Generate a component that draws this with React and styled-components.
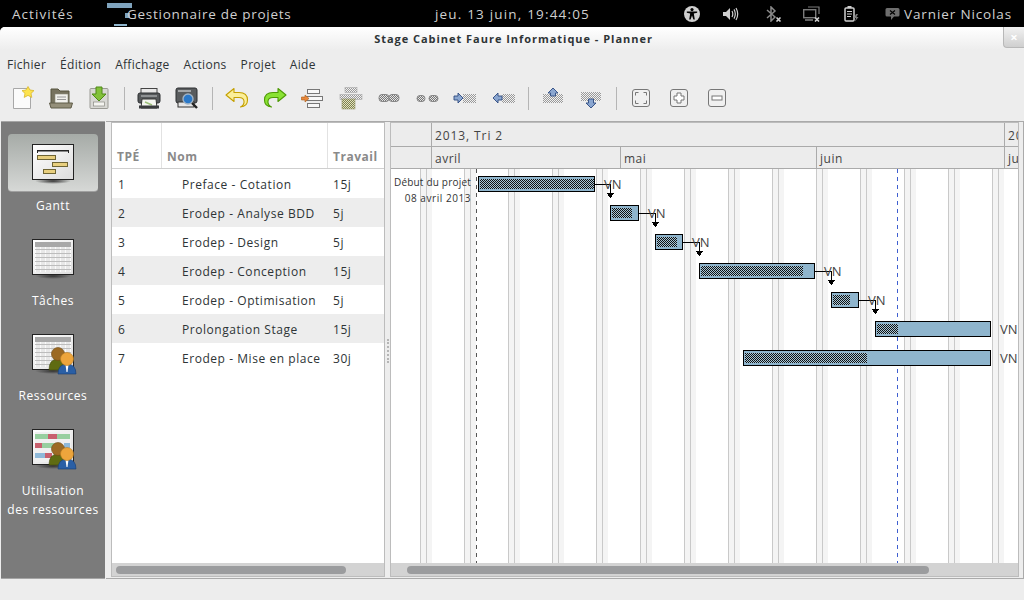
import React from 'react';
import styled, { createGlobalStyle } from 'styled-components';

const Global = createGlobalStyle`
	html, body {
		margin: 0;
		padding: 0;
		background: #000;
	}
	* {
		box-sizing: border-box;
	}
`;

const Page = styled.div`
	width: 1024px;
	height: 600px;
	overflow: hidden;
	display: flex;
	flex-direction: column;
	font-family: 'Open Sans', 'DejaVu Sans', sans-serif;
	color: #2e3436;
`;

const TopBar = styled.header`
	height: 27px;
	background: #000;
	color: #cfcfcf;
	display: flex;
	align-items: center;
	font-size: 13.5px;
	position: relative;
`;

const Activities = styled.span`
	margin-left: 12px;
	width: 94px;
	letter-spacing: 1.05px;
`;

const AppName = styled.span`
	margin-left: -5px;
	letter-spacing: 0.73px;
`;

const Clock = styled.span`
	position: absolute;
	left: 435px;
	letter-spacing: 1.18px;
`;

const Tray = styled.div`
	margin-left: auto;
	display: flex;
	align-items: center;
	padding-right: 12px;
`;

const User = styled.span`
	letter-spacing: 0.87px;
`;

const Window = styled.div`
	flex: 1;
	background: #ededed;
	border-radius: 5px 5px 0 0;
	display: flex;
	flex-direction: column;
	position: relative;
`;

const TitleBar = styled.div`
	height: 23px;
	background: linear-gradient(#fff, #ededed);
	border-radius: 5px 5px 0 0;
	display: flex;
	align-items: center;
	justify-content: center;
	font-size: 11px;
	font-weight: 700;
	letter-spacing: 0.97px;
	padding-left: 3px;
`;

const CloseButton = styled.div`
	position: absolute;
	top: 0;
	right: 0;
	width: 21px;
	height: 21px;
	background: linear-gradient(#f2f2f2, #cfcfcf);
	border: 1px solid #b8b8b8;
	border-width: 0 0 1px 1px;
	border-radius: 0 0 0 4px;
	color: #fff;
	font-size: 13px;
	font-weight: 700;
	display: grid;
	place-items: center;
`;

const MenuBar = styled.nav`
	height: 29px;
	display: flex;
	align-items: center;
	gap: 14px;
	padding-left: 7px;
	font-size: 12px;
	letter-spacing: 0.3px;
`;

const Toolbar = styled.div`
	height: 38px;
	display: flex;
	align-items: center;
	padding-left: 4px;
`;

const ToolButton = styled.div`
	width: 38px;
	height: 38px;
	display: grid;
	place-items: center;
`;

const ToolSeparator = styled.div`
	width: 12px;
	height: 23px;
	position: relative;
	display: flex;
	justify-content: center;

	&::before {
		content: '';
		width: 1px;
		background: #b5b5b5;
	}
`;

const Main = styled.main`
	margin-top: 4px;
	height: 458px;
	display: flex;
	padding-left: 1px;
`;

const Sidebar = styled.aside`
	width: 104px;
	background: #7b7b7b;
	border: 1px solid #a5a5a5;
	border-width: 1px 0 1px 0;
	padding-top: 12px;
	display: flex;
	flex-direction: column;
	align-items: center;
`;

const SideItem = styled.div`
	width: 90px;
	height: 95px;
	display: flex;
	flex-direction: column;
	align-items: center;
	color: #fff;
	font-size: 12px;
	letter-spacing: 0.55px;
	text-align: center;
	line-height: 19px;
	white-space: nowrap;
`;

const SideIcon = styled.div`
	width: 90px;
	height: 58px;
	flex: none;
	display: grid;
	place-items: center;
	border-radius: 4px;
	margin-bottom: 4px;
	background: ${(p) => (p.$active ? 'linear-gradient(#a6aba7, #d6d8d6)' : 'transparent')};
	border-bottom: 1px solid ${(p) => (p.$active ? '#a0a0a0' : 'transparent')};
`;

const Content = styled.div`
	flex: 1;
	margin-left: 1px;
	border: 1px solid #aaa;
	border-left: 0;
	padding: 0 4px 1px 5px;
	display: flex;
	background: #ededed;
`;

const Panel = styled.section`
	background: #fff;
	border: 1px solid #bcbcbc;
	display: flex;
	flex-direction: column;
	width: ${(p) => p.$width}px;
	flex: none;
`;

const Grip = styled.div`
	width: 5px;
	flex: none;
	display: flex;
	align-items: center;
	justify-content: center;
	padding-top: 2px;

	&::before {
		content: '';
		height: 24px;
		border-left: 2px dotted #b5b5b5;
	}
`;

const TableHead = styled.div`
	height: 46px;
	flex: none;
	display: grid;
	grid-template-columns: 50px 166px 1fr;
	border-bottom: 1px solid #cfcfcf;
`;

const HeadCell = styled.div`
	display: flex;
	align-items: flex-end;
	padding: 0 0 3px 5px;
	font-size: 12px;
	font-weight: 700;
	color: #8a8a8a;
	letter-spacing: 0.5px;
	border-right: ${(p) => (p.$last ? '0' : '1px solid #e2e2e2')};
`;

const Row = styled.div`
	height: 29px;
	flex: none;
	display: grid;
	grid-template-columns: 50px 166px 1fr;
	align-items: center;
	font-size: 12px;
	letter-spacing: 0.55px;
	background: ${(p) => (p.$even ? '#ededed' : '#fff')};
	padding-top: 2px;
`;

const Cell = styled.div`
	padding-left: ${(p) => p.$pad}px;
	white-space: nowrap;
`;

const Spacer = styled.div`
	flex: 1;
	min-height: 0;
	overflow: hidden;
`;

const ScrollTrack = styled.div`
	height: 13px;
	flex: none;
	background: #d3d3d3;
	display: flex;
	align-items: center;
	padding-left: ${(p) => p.$left}px;
`;

const ScrollThumb = styled.div`
	width: ${(p) => p.$width}px;
	height: 8px;
	border-radius: 4px;
	background: #9b9c9e;
`;

const TimeRow = styled.div`
	display: flex;
	height: ${(p) => p.$height}px;
	flex: none;
	background: #ececec;
	border-bottom: 1px solid #aaa;
	overflow: hidden;
	font-size: 12px;
	letter-spacing: ${(p) => p.$spacing}px;
	color: #444;
`;

const TimeCell = styled.div`
	width: ${(p) => p.$width}px;
	flex: none;
	border-right: 1px solid #aaa;
	padding: 1px 0 0 3px;
	display: flex;
	align-items: center;
	white-space: nowrap;
`;

const ChartBody = styled.div`
	flex: 1;
	min-height: 0;
	overflow: hidden;

	svg {
		display: block;
		font-family: 'Open Sans', 'DejaVu Sans', sans-serif;
	}
`;

const tasks = [
	['1', 'Preface - Cotation', '15j'],
	['2', 'Erodep - Analyse BDD', '5j'],
	['3', 'Erodep - Design', '5j'],
	['4', 'Erodep - Conception', '15j'],
	['5', 'Erodep - Optimisation', '5j'],
	['6', 'Prolongation Stage', '15j'],
	['7', 'Erodep - Mise en place', '30j'],
];

// x, width, y, hatched width, next task x (for the link)
const bars = [
	{ x: 478, w: 117, y: 176, done: 114, next: 610 },
	{ x: 610, w: 29, y: 205, done: 20, next: 655 },
	{ x: 655, w: 28, y: 234, done: 20, next: 699 },
	{ x: 699, w: 116, y: 263, done: 102, next: 831 },
	{ x: 831, w: 28, y: 292, done: 17, next: 875 },
	{ x: 875, w: 116, y: 321, done: 21 },
	{ x: 743, w: 248, y: 350, done: 122 },
];

const weekends = [420, 464, 508, 552, 596, 640, 684, 728, 772, 816, 860, 904, 948, 992];

function Chart() {
	return (
		<svg width='627' height='394' viewBox='391 169 627 394' shapeRendering='crispEdges'>
			<defs>
				<pattern id='hatch' width='2' height='2' patternUnits='userSpaceOnUse'>
					<rect width='2' height='2' fill='#a6c6d8' />
					<rect width='1' height='1' fill='#111' />
					<rect x='1' y='1' width='1' height='1' fill='#111' />
				</pattern>
			</defs>
			{weekends.map((x) => (
				<g key={x}>
					<rect x={x} y='169' width='12' height='394' fill='#f4f4f4' />
					<rect x={x} y='169' width='1' height='394' fill='#c9c9c9' />
					<rect x={x + 6} y='169' width='1' height='394' fill='#c9c9c9' />
				</g>
			))}
			<line x1='476.5' y1='169' x2='476.5' y2='563' stroke='#555' strokeDasharray='4 4' />
			<line x1='897.5' y1='169' x2='897.5' y2='563' stroke='#3f5fd0' strokeDasharray='4 4' />
			<text x='471' y='186' textAnchor='end' fontSize='10' letterSpacing='0.2' fill='#333'>Début du projet</text>
			<text x='471' y='202' textAnchor='end' fontSize='10' letterSpacing='0.55' fill='#333'>08 avril 2013</text>
			{bars.map((b) => (
				<g key={b.y}>
					{b.next && (
						<g>
							<rect x={b.x + b.w} y={b.y + 8} width={b.next - b.x - b.w + 1} height='1' fill='#000' />
							<rect x={b.next} y={b.y + 8} width='1' height='14' fill='#000' />
							<polygon points={`${b.next - 3},${b.y + 17} ${b.next + 4},${b.y + 17} ${b.next + 1},${b.y + 22} ${b.next},${b.y + 22}`} fill='#000' />
						</g>
					)}
					<rect x={b.x + 0.5} y={b.y + 0.5} width={b.w - 1} height='15' fill='#8fb5cd' stroke='#000' />
					<rect x={b.x + 2} y={b.y + 3} width={b.done} height='10' fill='url(#hatch)' />
					<text x={b.x + b.w + 9} y={b.y + 13} fontSize='13' fill='#444'>VN</text>
				</g>
			))}
		</svg>
	);
}

function ActivityIcon() {
	return (
		<svg width='26' height='27' viewBox='0 0 26 27' style={{ flex: 'none' }}>
			<rect x='1' y='3' width='25' height='5' fill='#7fa3bd' />
			<rect x='19' y='13' width='5' height='5' fill='#7fa3bd' />
			<rect x='8' y='24' width='13' height='2' fill='#8fb5cd' />
		</svg>
	);
}

function Accessibility() {
	return (
		<svg width='16' height='16' viewBox='0 0 16 16'>
			<circle cx='8' cy='8' r='8' fill='#cfcfcf' />
			<circle cx='8' cy='3.6' r='1.6' fill='#000' />
			<path d='M2.8 5.6 L13.2 5.6 L13.2 6.8 L9.8 7.6 L10.8 13.4 L9.4 13.4 L8 9.6 L6.6 13.4 L5.2 13.4 L6.2 7.6 L2.8 6.8 Z' fill='#000' />
		</svg>
	);
}

function Volume() {
	return (
		<svg width='16' height='14' viewBox='0 0 16 14'>
			<path d='M0 5 H3 L7 1 V13 L3 9 H0 Z' fill='#cfcfcf' />
			<path d='M9 4 Q10.6 7 9 10 M11 2.4 Q13.6 7 11 11.6 M13 1 Q16.4 7 13 13' stroke='#cfcfcf' strokeWidth='1.2' fill='none' />
		</svg>
	);
}

function Bluetooth() {
	return (
		<svg width='16' height='16' viewBox='0 0 16 16'>
			<path d='M1 4 L9 11 L5 15 V1 L9 5 L1 12' stroke='#8a8a8a' strokeWidth='1.5' fill='none' />
			<path d='M10.5 11.5 L14.5 15.5 M14.5 11.5 L10.5 15.5' stroke='#cfcfcf' strokeWidth='1.6' />
		</svg>
	);
}

function NetworkOff() {
	return (
		<svg width='18' height='16' viewBox='0 0 18 16'>
			<rect x='0.7' y='3.7' width='12' height='8' fill='none' stroke='#7a7a7a' strokeWidth='1.4' />
			<path d='M5 1 H16 V8' stroke='#7a7a7a' strokeWidth='1.2' fill='none' />
			<path d='M2 14 H10' stroke='#7a7a7a' strokeWidth='1.6' />
			<path d='M12 11.5 L16 15.5 M16 11.5 L12 15.5' stroke='#cfcfcf' strokeWidth='1.6' />
		</svg>
	);
}

function Battery() {
	return (
		<svg width='15' height='16' viewBox='0 0 15 16'>
			<rect x='1' y='2' width='9' height='13' rx='1' fill='none' stroke='#cfcfcf' strokeWidth='1.5' />
			<rect x='3.5' y='0' width='4' height='2' fill='#cfcfcf' />
			<path d='M3 5.5 H8 M3 8 H8 M3 10.5 H7' stroke='#cfcfcf' strokeWidth='1.2' />
			<path d='M12 8 L10 12 H12 L11 15.5 L14.5 11 H12.5 L14 8 Z' fill='#7a7a7a' />
		</svg>
	);
}

function Chat() {
	return (
		<svg width='15' height='14' viewBox='0 0 15 14'>
			<path d='M2 1 H13 Q14.5 1 14.5 2.5 V8 Q14.5 9.5 13 9.5 H9 L6 13 V9.5 H2 Q0.5 9.5 0.5 8 V2.5 Q0.5 1 2 1 Z' fill='#6e6e6e' />
			<path d='M5 3.5 L10 7.5 M10 3.5 L5 7.5' stroke='#000' strokeWidth='1.2' />
		</svg>
	);
}

const TrayItem = styled.div`
	width: ${(p) => p.$width}px;
	display: grid;
	place-items: center;
	flex: none;
`;

/* toolbar drawings, all on a 26 box */
const Tool = ({ children }) => (
	<svg width='26' height='26' viewBox='0 0 26 26'>
		{children}
	</svg>
);

const Dots = ({ x, y, w, h }) => <rect x={x} y={y} width={w} height={h} fill='url(#tooldots)' stroke='#aaa' strokeWidth='0.6' />;

const toolIcons = {
	new: (
		<Tool>
			<path d='M3.5 3.5 H18 L20.5 6 V23.5 H3.5 Z' fill='#fbfbfb' stroke='#a8a8a8' />
			<path d='M18 1.5 L20 5 L24 5.6 L21 8.4 L21.8 12.4 L18 10.4 L14.2 12.4 L15 8.4 L12 5.6 L16 5 Z' fill='#fde34e' stroke='#d8b62c' strokeWidth='0.8' />
		</Tool>
	),
	open: (
		<Tool>
			<path d='M3 4 H10 L12 6 H21 V20 H3 Z' fill='#77735f' stroke='#57543f' />
			<rect x='7' y='9' width='13' height='10' fill='#f1f1ec' stroke='#8a8a7c' strokeWidth='0.6' />
			<path d='M9 12 H18 M9 14.5 H18' stroke='#999' />
			<path d='M1.5 18 H24.5 L23 23 H3 Z' fill='#948f79' stroke='#5f5c48' />
		</Tool>
	),
	save: (
		<Tool>
			<rect x='4' y='3.5' width='18' height='20' rx='1' fill='#d8d8d4' stroke='#9a9a94' />
			<rect x='7.5' y='17' width='11' height='4' fill='#f4f4f0' stroke='#8a8a84' strokeWidth='0.7' />
			<path d='M10 2 H16 V9 H20 L13 16 L6 9 H10 Z' fill='#82c13a' stroke='#4e8a16' />
		</Tool>
	),
	print: (
		<Tool>
			<rect x='5' y='3.5' width='16' height='6' fill='#e8e8e8' stroke='#444' />
			<rect x='2' y='8' width='22' height='10' rx='2' fill='#55585a' stroke='#2c2e30' />
			<rect x='5' y='10' width='16' height='2' fill='#8d9092' />
			<path d='M6 14 H20 L21 23 H5 Z' fill='#f4f6f0' stroke='#333' />
			<path d='M9 17 L16 20' stroke='#9cc07a' strokeWidth='1.5' />
			<rect x='3' y='20.5' width='20' height='3' fill='#3a3c3e' />
		</Tool>
	),
	preview: (
		<Tool>
			<rect x='2' y='3' width='21' height='15' rx='2' fill='#595c5e' stroke='#2c2e30' />
			<rect x='4' y='5' width='13' height='2' fill='#a4a7a9' />
			<rect x='4' y='17' width='16' height='5' fill='#e6e6e6' stroke='#333' />
			<circle cx='14' cy='14' r='5' fill='#2a78c8' stroke='#9fb2c4' strokeWidth='1.4' />
			<path d='M18 18 L23 23' stroke='#222' strokeWidth='2.4' />
		</Tool>
	),
	undo: (
		<Tool>
			<path d='M2 10 L10 3.5 V7.5 H15 Q23.5 7.5 23.5 15 Q23.5 21.5 16.5 22 Q20.5 20 20 16 Q19.5 12.5 15 12.5 H10 V16.5 Z' fill='#fbef9a' stroke='#c4a000' strokeWidth='1.1' strokeLinejoin='round' />
		</Tool>
	),
	redo: (
		<Tool>
			<path d='M24 10 L16 3.5 V7.5 H11 Q2.5 7.5 2.5 15 Q2.5 21.5 9.5 22 Q5.5 20 6 16 Q6.5 12.5 11 12.5 H16 V16.5 Z' fill='#8ae234' stroke='#4e9a06' strokeWidth='1.1' strokeLinejoin='round' />
		</Tool>
	),
	insert: (
		<Tool>
			<rect x='7.5' y='4.5' width='12' height='4' fill='#f7f7f7' stroke='#777' />
			<rect x='5.5' y='11.5' width='17' height='4' fill='#f7f7f7' stroke='#777' />
			<rect x='7.5' y='18.5' width='12' height='4' fill='#f7f7f7' stroke='#777' />
			<path d='M1.5 12 H5 V10 L9 13.5 L5 17 V15 H1.5 Z' fill='#e9873a' stroke='#a65b17' strokeWidth='0.6' />
		</Tool>
	),
	insertMany: (
		<Tool>
			<Dots x={7} y={2.5} w={12} h={5} />
			<Dots x={2} y={9.5} w={22} h={5} />
			<rect x='4' y='14' width='13' height='10' fill='url(#tooldots2)' stroke='#9a9a70' strokeWidth='0.6' />
		</Tool>
	),
	link: (
		<Tool>
			<rect x='3' y='9.5' width='10' height='7' rx='3' fill='url(#tooldots3)' stroke='#888' />
			<rect x='13' y='9.5' width='10' height='7' rx='3' fill='url(#tooldots3)' stroke='#888' />
		</Tool>
	),
	unlink: (
		<Tool>
			<rect x='3' y='10.5' width='8' height='6' rx='3' fill='url(#tooldots3)' stroke='#888' />
			<rect x='15' y='10.5' width='9' height='6' rx='3' fill='url(#tooldots3)' stroke='#888' />
		</Tool>
	),
	indent: (
		<Tool>
			<rect x='11' y='9' width='13' height='9' fill='url(#tooldots)' />
			<path d='M2 11 H6 V8 L11 13 L6 18 V15 H2 Z' fill='#8aa6d0' stroke='#2c4a80' strokeWidth='0.9' />
		</Tool>
	),
	unindent: (
		<Tool>
			<rect x='12' y='9' width='13' height='9' fill='url(#tooldots)' />
			<path d='M12 11 H8 V8 L3 13 L8 18 V15 H12 Z' fill='#8aa6d0' stroke='#2c4a80' strokeWidth='0.9' />
		</Tool>
	),
	up: (
		<Tool>
			<rect x='3' y='9' width='20' height='9' fill='url(#tooldots)' />
			<path d='M13 3 L18 8 L15.5 8 V11 H10.5 V8 H8 Z' fill='#8aa6d0' stroke='#2c4a80' strokeWidth='0.9' />
		</Tool>
	),
	down: (
		<Tool>
			<rect x='3' y='7' width='20' height='9' fill='url(#tooldots)' />
			<path d='M13 23 L18 18 L15.5 18 V14 H10.5 V18 H8 Z' fill='#8aa6d0' stroke='#2c4a80' strokeWidth='0.9' />
		</Tool>
	),
	fit: (
		<Tool>
			<rect x='4.5' y='4.5' width='17' height='17' rx='2.5' fill='#f0f0f0' stroke='#777' />
			<path d='M7.5 10.5 V7.5 H10.5 M15.5 7.5 H18.5 V10.5 M18.5 15.5 V18.5 H15.5 M10.5 18.5 H7.5 V15.5' fill='none' stroke='#777' />
		</Tool>
	),
	zoomIn: (
		<Tool>
			<rect x='4.5' y='4.5' width='17' height='17' rx='2.5' fill='#f0f0f0' stroke='#777' />
			<path d='M11 8 H15 V11 H18 V15 H15 V18 H11 V15 H8 V11 H11 Z' fill='#fff' stroke='#777' />
		</Tool>
	),
	zoomOut: (
		<Tool>
			<rect x='4.5' y='4.5' width='17' height='17' rx='2.5' fill='#f0f0f0' stroke='#777' />
			<rect x='8' y='11' width='10' height='4' fill='#fff' stroke='#777' />
		</Tool>
	),
};

const toolbarLayout = [
	'new', 'open', 'save', '|',
	'print', 'preview', '|',
	'undo', 'redo', 'insert', 'insertMany', 'link', 'unlink', 'indent', 'unindent', '|',
	'up', 'down', '|',
	'fit', 'zoomIn', 'zoomOut',
];

const SheetDefs = () => (
	<defs>
		<linearGradient id='sheet' x1='0' y1='0' x2='1' y2='1'>
			<stop offset='0' stopColor='#fff' />
			<stop offset='1' stopColor='#dcdcdc' />
		</linearGradient>
		<radialGradient id='shade'>
			<stop offset='0' stopColor='#333' />
			<stop offset='1' stopColor='#333' stopOpacity='0' />
		</radialGradient>
		<pattern id='cells' width='5' height='4' patternUnits='userSpaceOnUse'>
			<rect width='5' height='4' fill='#e8e8e8' />
			<rect width='1' height='4' fill='#fafafa' />
			<rect width='5' height='1' fill='#bdbdbd' />
		</pattern>
	</defs>
);

// sheet with its shadow, children are drawn on top of the paper
const Sheet = ({ children }) => (
	<svg width='48' height='44' viewBox='-1 -1 48 44'>
		<SheetDefs />
		<ellipse cx='23' cy='39' rx='18' ry='3' fill='url(#shade)' />
		<rect x='2.5' y='2.5' width='41' height='35' fill='url(#sheet)' stroke='#222' />
		{children}
	</svg>
);

const People = () => (
	<g>
		<path d='M19 38 Q19 27 28 27 Q37 27 37 38 Z' fill='#5f6b12' stroke='#3f480a' strokeWidth='0.6' />
		<circle cx='28' cy='22' r='6.5' fill='#9c6a24' stroke='#6e4812' strokeWidth='0.6' />
		<path d='M28 42 Q28 32 37 32 Q46 32 46 42 Z' fill='#2a5fa5' stroke='#1a3c70' strokeWidth='0.6' />
		<path d='M35.5 32.5 L38.5 32.5 L37.5 40 L36.5 40 Z' fill='#fff' />
		<circle cx='37' cy='27' r='6.5' fill='#eda53c' stroke='#bb7a1c' strokeWidth='0.6' />
	</g>
);

const sideIcons = {
	gantt: (
		<Sheet>
			<rect x='7' y='8' width='32' height='1.5' fill='#222' />
			<rect x='7' y='8' width='1' height='3' fill='#222' />
			<rect x='38' y='8' width='1' height='3' fill='#222' />
			<rect x='7.5' y='13.5' width='18' height='4' fill='#e8cf7e' stroke='#6e6434' />
			<rect x='22.5' y='20.5' width='15' height='4' fill='#e8cf7e' stroke='#6e6434' />
			<rect x='13.5' y='27.5' width='12' height='4' fill='#e8cf7e' stroke='#6e6434' />
		</Sheet>
	),
	tasks: (
		<Sheet>
			<rect x='5' y='5' width='36' height='30' fill='url(#cells)' />
			<rect x='5' y='5' width='36' height='5' fill='#a8a8a8' />
		</Sheet>
	),
	resources: (
		<Sheet>
			<rect x='5' y='5' width='36' height='30' fill='url(#cells)' />
			<rect x='5' y='5' width='36' height='5' fill='#a8a8a8' />
			<People />
		</Sheet>
	),
	usage: (
		<Sheet>
			<rect x='5' y='5' width='36' height='30' fill='#f0f0f0' />
			<rect x='5' y='7' width='13' height='5' fill='#97cf9f' />
			<rect x='18' y='7' width='9' height='5' fill='#c8606e' />
			<rect x='27' y='7' width='13' height='5' fill='#97cf9f' />
			<rect x='5' y='16' width='7' height='5' fill='#c8606e' />
			<rect x='12' y='16' width='16' height='5' fill='#97cf9f' />
			<rect x='34' y='16' width='6' height='5' fill='#8fb9d9' />
			<rect x='5' y='26' width='10' height='5' fill='#8fb9d9' />
			<rect x='15' y='26' width='7' height='5' fill='#c8606e' />
			<People />
		</Sheet>
	),
};

const sideItems = [
	{ id: 'gantt', label: ['Gantt'], active: true },
	{ id: 'tasks', label: ['Tâches'] },
	{ id: 'resources', label: ['Ressources'] },
	{ id: 'usage', label: ['Utilisation', 'des ressources'] },
];

export default function App() {
	return (
		<Page>
			<Global />
			<svg width='0' height='0' style={{ position: 'absolute' }}>
				<defs>
					<pattern id='tooldots' width='2' height='2' patternUnits='userSpaceOnUse'>
						<rect width='2' height='2' fill='#f2f2f2' />
						<rect width='1' height='1' fill='#999' />
						<rect x='1' y='1' width='1' height='1' fill='#999' />
					</pattern>
					<pattern id='tooldots2' width='2' height='2' patternUnits='userSpaceOnUse'>
						<rect width='2' height='2' fill='#e2e3c0' />
						<rect width='1' height='1' fill='#7e8050' />
						<rect x='1' y='1' width='1' height='1' fill='#7e8050' />
					</pattern>
					<pattern id='tooldots3' width='2' height='2' patternUnits='userSpaceOnUse'>
						<rect width='2' height='2' fill='#e4e4e4' />
						<rect width='1' height='1' fill='#777' />
						<rect x='1' y='1' width='1' height='1' fill='#777' />
					</pattern>
				</defs>
			</svg>
			<TopBar>
				<Activities>Activités</Activities>
				<ActivityIcon />
				<AppName>Gestionnaire de projets</AppName>
				<Clock>jeu. 13 juin, 19:44:05</Clock>
				<Tray>
					<TrayItem $width={48}><Accessibility /></TrayItem>
					<TrayItem $width={30}><Volume /></TrayItem>
					<TrayItem $width={56}><Bluetooth /></TrayItem>
					<TrayItem $width={20}><NetworkOff /></TrayItem>
					<TrayItem $width={58}><Battery /></TrayItem>
					<TrayItem $width={24}><Chat /></TrayItem>
					<User>Varnier Nicolas</User>
				</Tray>
			</TopBar>
			<Window>
				<TitleBar>Stage Cabinet Faure Informatique - Planner</TitleBar>
				<CloseButton>×</CloseButton>
				<MenuBar>
					<span>Fichier</span>
					<span>Édition</span>
					<span>Affichage</span>
					<span>Actions</span>
					<span>Projet</span>
					<span>Aide</span>
				</MenuBar>
				<Toolbar>
					{toolbarLayout.map((name, i) =>
						name === '|' ? (
							<ToolSeparator key={i} />
						) : (
							<ToolButton key={name}>{toolIcons[name]}</ToolButton>
						)
					)}
				</Toolbar>
				<Main>
					<Sidebar>
						{sideItems.map((item) => (
							<SideItem key={item.id}>
								<SideIcon $active={item.active}>{sideIcons[item.id]}</SideIcon>
								{item.label.map((line) => (
									<span key={line}>{line}</span>
								))}
							</SideItem>
						))}
					</Sidebar>
					<Content>
						<Panel $width={274}>
							<TableHead>
								<HeadCell>TPÉ</HeadCell>
								<HeadCell>Nom</HeadCell>
								<HeadCell $last>Travail</HeadCell>
							</TableHead>
							{tasks.map(([id, name, work], i) => (
								<Row key={id} $even={i % 2 === 1}>
									<Cell $pad={6}>{id}</Cell>
									<Cell $pad={20}>{name}</Cell>
									<Cell $pad={5}>{work}</Cell>
								</Row>
							))}
							<Spacer />
							<ScrollTrack $left={4}>
								<ScrollThumb $width={230} />
							</ScrollTrack>
						</Panel>
						<Grip />
						<Panel $width={629}>
							<TimeRow $height={24} $spacing={0.9}>
								<TimeCell $width={41} />
								<TimeCell $width={573}>2013, Tri 2</TimeCell>
								<TimeCell $width={40}>2013</TimeCell>
							</TimeRow>
							<TimeRow $height={22} $spacing={0.5}>
								<TimeCell $width={41} />
								<TimeCell $width={189}>avril</TimeCell>
								<TimeCell $width={196}>mai</TimeCell>
								<TimeCell $width={188}>juin</TimeCell>
								<TimeCell $width={40}>juillet</TimeCell>
							</TimeRow>
							<ChartBody>
								<Chart />
							</ChartBody>
							<ScrollTrack $left={16}>
								<ScrollThumb $width={522} />
							</ScrollTrack>
						</Panel>
					</Content>
				</Main>
			</Window>
		</Page>
	);
}
